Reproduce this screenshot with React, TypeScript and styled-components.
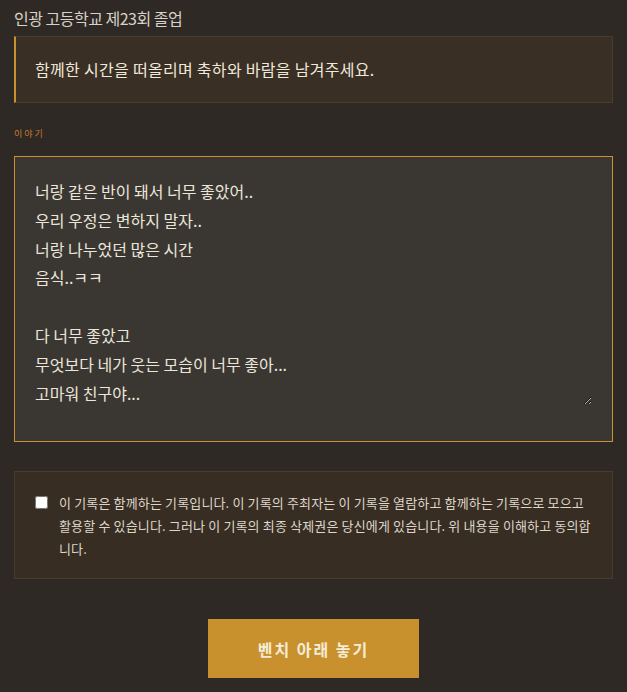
import React from 'react';
import styled, { createGlobalStyle } from 'styled-components';

const GlobalStyle = createGlobalStyle`
  html, body {
    margin: 0;
    padding: 0;
    background-color: #2e2925;
  }

  body {
    font-family: 'Noto Sans CJK KR', 'Noto Sans', sans-serif;
  }
`;

const Page = styled.div`
  display: flex;
  flex-direction: column;
  padding: 6px 14px 14px 14px;
  min-height: 692px;
  box-sizing: border-box;
`;

const Title = styled.h1`
  margin: 0;
  font-size: 16px;
  font-weight: 400;
  line-height: 24px;
  letter-spacing: -0.5px;
  color: #d8d2c8;
`;

const Notice = styled.div`
  margin-top: 6px;
  background-color: #3a2f24;
  border: 1px solid #4a3c2a;
  border-left: 2px solid #c8922e;
  padding: 19px 19px;
  font-size: 16px;
  line-height: 27px;
  letter-spacing: 0.3px;
  color: #efe9dc;
`;

const FieldLabel = styled.label`
  display: block;
  margin-top: 24px;
  font-size: 9px;
  line-height: 14px;
  color: #c8782c;
`;

const TextBox = styled.div`
  margin-top: 15px;
  background-color: #3a3733;
  border: 1px solid #c8922e;
  padding: 20px 20px 36px 20px;
`;

const StoryInput = styled.textarea`
  display: block;
  width: 100%;
  height: 228px;
  box-sizing: border-box;
  margin: 0;
  padding: 0;
  border: none;
  outline: none;
  background: transparent;
  resize: vertical;
  font-family: 'Noto Sans CJK KR', 'Noto Sans', sans-serif;
  font-size: 16px;
  line-height: 28.8px;
  color: #ece6da;
`;

const Consent = styled.label`
  display: flex;
  align-items: flex-start;
  gap: 11px;
  margin-top: 29px;
  background-color: #382d22;
  border: 1px solid #4a3c2a;
  padding: 19px 19px 18px 20px;
`;

const CheckBox = styled.input`
  flex: 0 0 auto;
  width: 13px;
  height: 13px;
  margin: 5px 0 0 0;
`;

const ConsentText = styled.span`
  font-size: 13px;
  line-height: 23px;
  letter-spacing: 0.15px;
  color: #ddd6ca;
`;

const Actions = styled.div`
  display: flex;
  justify-content: center;
  margin-top: 40px;
`;

const SubmitButton = styled.button`
  width: 211px;
  height: 59px;
  border: none;
  background-color: #c8912d;
  color: #f5ecd8;
  font-family: 'Noto Sans CJK KR', 'Noto Sans', sans-serif;
  font-size: 16px;
  font-weight: 700;
  letter-spacing: 2px;
  cursor: pointer;
`;

const story = `너랑 같은 반이 돼서 너무 좋았어..
우리 우정은 변하지 말자..
너랑 나누었던 많은 시간
음식..ㅋㅋ

다 너무 좋았고
무엇보다 네가 웃는 모습이 너무 좋아...
고마워 친구야...`;

export default function App() {
  return (
    <>
      <GlobalStyle />
      <Page>
        <Title>인광 고등학교 제23회 졸업</Title>
        <Notice>함께한 시간을 떠올리며 축하와 바람을 남겨주세요.</Notice>
        <FieldLabel htmlFor="story">이 야 기</FieldLabel>
        <TextBox>
          <StoryInput id="story" defaultValue={story} />
        </TextBox>
        <Consent>
          <CheckBox type="checkbox" />
          <ConsentText>
            이 기록은 함께하는 기록입니다. 이 기록의 주최자는 이 기록을 열람하고 함께하는 기록으로 모으고
            활용할 수 있습니다. 그러나 이 기록의 최종 삭제권은 당신에게 있습니다. 위 내용을 이해하고 동의합니다.
          </ConsentText>
        </Consent>
        <Actions>
          <SubmitButton type="button">벤치 아래 놓기</SubmitButton>
        </Actions>
      </Page>
    </>
  );
}
